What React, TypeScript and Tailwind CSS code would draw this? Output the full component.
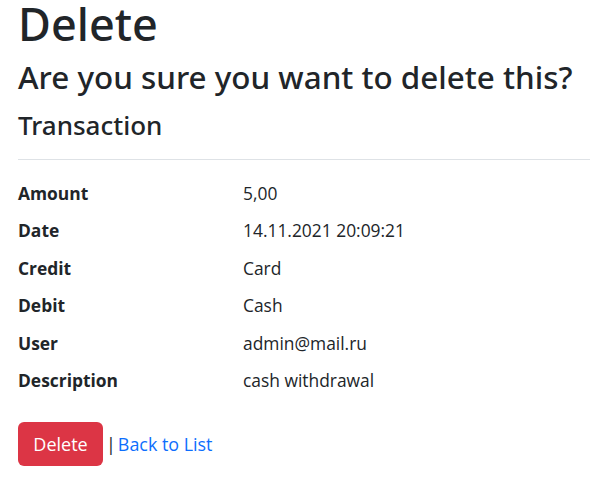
import React from "react";

const rows: [string, string][] = [
  ["Amount", "5,00"],
  ["Date", "14.11.2021 20:09:21"],
  ["Credit", "Card"],
  ["Debit", "Cash"],
  ["User", "admin@mail.ru"],
  ["Description", "cash withdrawal"],
];

export default function App() {
  return (
    <div className="min-h-[480px] bg-white text-[#212529] pl-[18px] pr-px" style={{ fontFamily: '"Open Sans", "Noto Sans", sans-serif' }}>
      <h1 className="text-[45px] leading-[48px] font-medium" style={{ fontFamily: '"Noto Sans", sans-serif' }}>Delete</h1>
      <h2 className="text-[31.4px] leading-[38px] font-medium mt-[10px]" style={{ fontFamily: '"Noto Sans", sans-serif' }}>Are you sure you want to delete this?</h2>
      <div>
        <h4 className="text-[26px] leading-[30px] font-medium mt-[14px]" style={{ fontFamily: '"Noto Sans", sans-serif' }}>Transaction</h4>
        <hr className="mt-[19px] border-t border-[#dee2e6]" />
        <dl className="mt-[15px] text-[17.4px]">
          {rows.map(([k, v]) => (
            <div key={k} className="grid grid-cols-[225px_1fr] leading-[37.4px]">
              <dt className="font-bold">{k}</dt>
              <dd>{v}</dd>
            </div>
          ))}
        </dl>
        <div className="mt-[23px] flex items-center text-[17.9px]">
          <button className="h-[44px] w-[85px] rounded-[6px] bg-[#dc3545] text-white text-[18px]">Delete</button>
          <span className="ml-[3px]">|</span>
          <a className="ml-[2px] text-[#0d6efd]" href="#">Back to List</a>
        </div>
      </div>
    </div>
  );
}
